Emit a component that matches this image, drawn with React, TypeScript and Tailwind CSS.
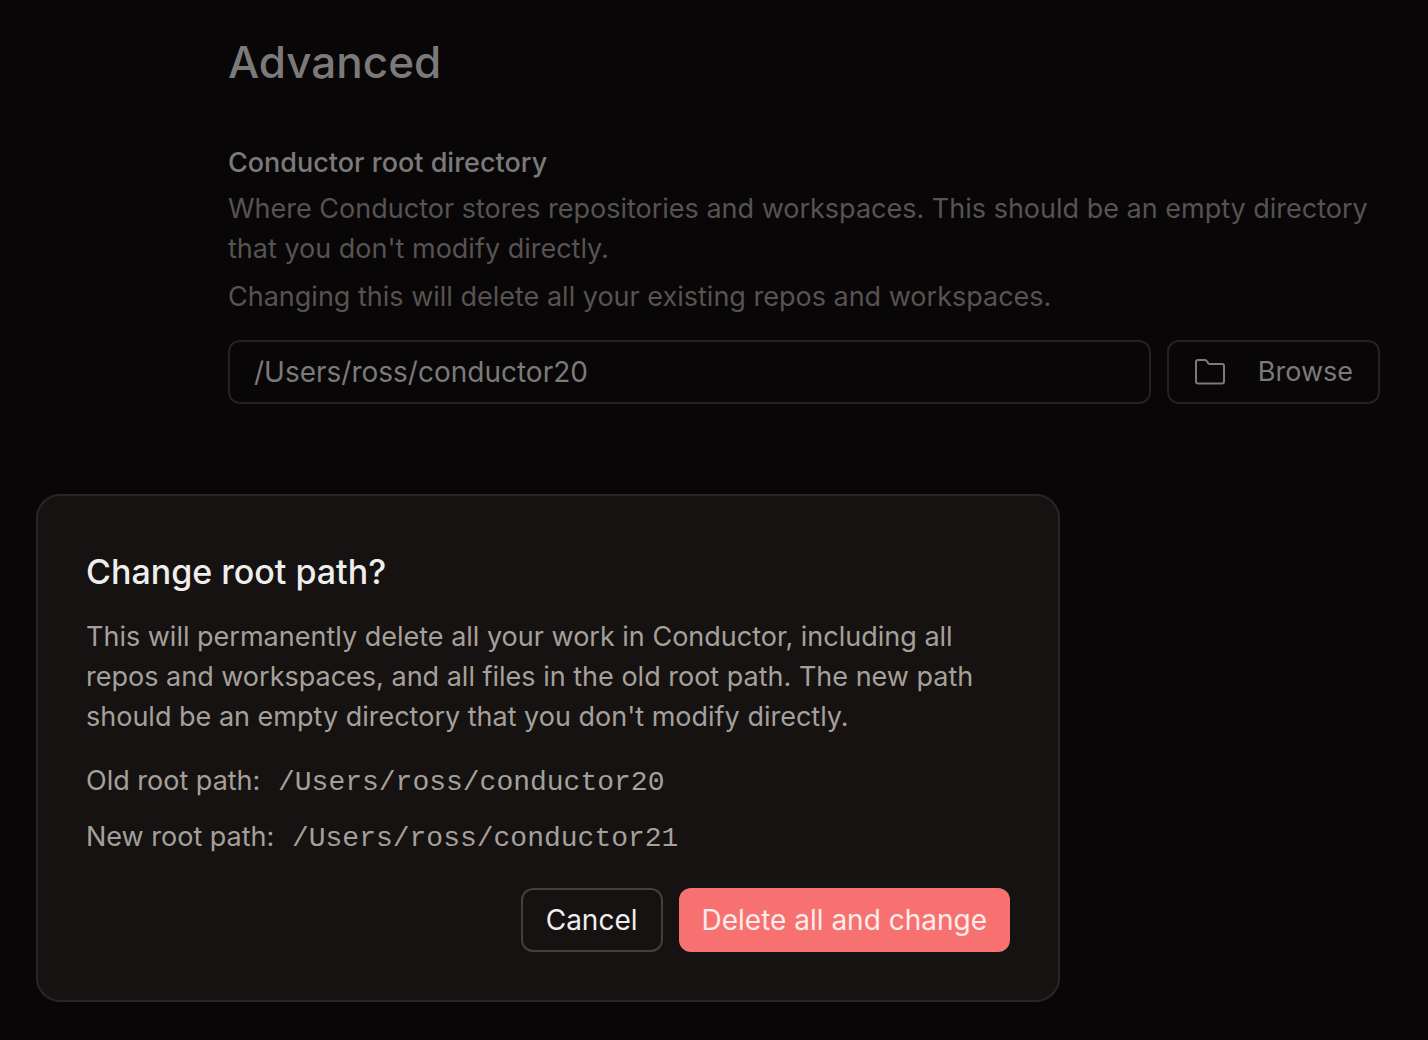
function FolderIcon() {
  return (
    <svg aria-hidden="true" viewBox="0 0 32 32" className="size-8" fill="none" stroke="currentColor" strokeWidth="2" strokeLinejoin="round">
      <path d="M2 6a2 2 0 0 1 2-2h6.8a2 2 0 0 1 1.5.7l2.1 2.6a2 2 0 0 0 1.5.7H28a2 2 0 0 1 2 2v15.5a2 2 0 0 1-2 2H4a2 2 0 0 1-2-2Z" />
    </svg>
  );
}

export default function App() {
  return (
    <main className="min-h-screen bg-[#080607] pb-[38px] font-['Inter',sans-serif] text-[27px] leading-10 text-[#575350]">
      <section className="pl-[228px] pr-12 pt-8">
        <h1 className="text-[44px] font-medium leading-[60px] text-[#7c7a79]">Advanced</h1>
        <label htmlFor="root" className="mt-[51px] block font-medium text-[#7c7a79]">Conductor root directory</label>
        <p className="mt-[6px]">Where Conductor stores repositories and workspaces. This should be an empty directory that you don't modify directly.</p>
        <p className="mt-2">Changing this will delete all your existing repos and workspaces.</p>
        <div className="mt-[23px] flex gap-4">
          <input id="root" defaultValue="/Users/ross/conductor20" className="h-16 min-w-0 flex-1 rounded-xl border-2 border-[#242120] bg-transparent px-6 text-[28px] text-[#7c7a79] outline-none" />
          <button className="flex h-16 items-center gap-8 rounded-xl border-2 border-[#242120] px-[25px] text-[#7c7a79]">
            <FolderIcon />
            Browse
          </button>
        </div>
      </section>
      <section role="dialog" aria-labelledby="dialog-title" className="ml-9 mt-[90px] max-w-[1024px] rounded-3xl border-2 border-[#292524] bg-[#151211] p-12 text-[#a6a09b]">
        <h2 id="dialog-title" className="text-[34px] font-medium leading-[56px] text-[#f0eeed]">Change root path?</h2>
        <p className="mt-[17px]">This will permanently delete all your work in Conductor, including all repos and workspaces, and all files in the old root path. The new path should be an empty directory that you don't modify directly.</p>
        <p className="mt-6">Old root path: <code className="ml-[10px] font-['Liberation_Mono',monospace] text-[28px] leading-none">/Users/ross/conductor20</code></p>
        <p className="mt-4">New root path: <code className="ml-[10px] font-['Liberation_Mono',monospace] text-[28px] leading-none">/Users/ross/conductor21</code></p>
        <div className="mt-[31px] flex justify-end gap-4">
          <button className="h-16 rounded-xl border-2 border-[#44403b] px-[23px] text-[28px] text-[#f0eeed]">Cancel</button>
          <button className="h-16 rounded-xl bg-[#f87171] px-[23px] text-[28px] text-[#fdecea]">Delete all and change</button>
        </div>
      </section>
    </main>
  );
}
